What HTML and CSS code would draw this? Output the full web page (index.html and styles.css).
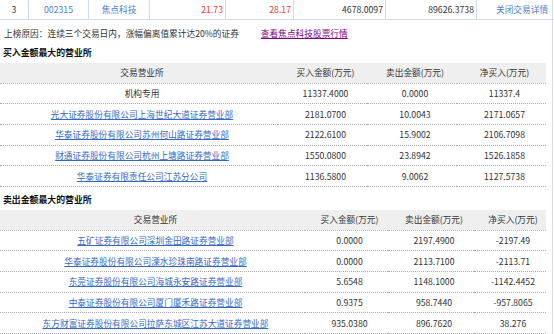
FILE: index.html
```html
<!DOCTYPE html>
<html lang="zh-CN">
<head>
    <meta charset="UTF-8">
    <title>龙虎榜 - 焦点科技</title>
    <link rel="stylesheet" href="styles.css">
</head>
<body>
    <div class="page">
        <table class="stock-row">
            <tr>
                <td class="c-no">3</td>
                <td class="c-code blue">002315</td>
                <td class="c-name blue">焦点科技</td>
                <td class="c-price num red">21.73</td>
                <td class="c-rise num red">28.17</td>
                <td class="c-vol num">4678.0097</td>
                <td class="c-amt num">89626.3738</td>
                <td class="c-act blue">关闭交易详情</td>
            </tr>
        </table>

        <p class="reason">上榜原因：连续三个交易日内，涨幅偏离值累计达20%的证券<a class="quote-link" href="#">查看焦点科技股票行情</a></p>

        <h3>买入金额最大的营业所</h3>
        <table class="dept buy">
            <colgroup>
                <col class="w1"><col class="w2"><col class="w3"><col class="w4">
            </colgroup>
            <tr class="head">
                <td>交易营业所</td>
                <td>买入金额(万元)</td>
                <td>卖出金额(万元)</td>
                <td>净买入(万元)</td>
            </tr>
            <tr><td>机构专用</td><td>11337.4000</td><td>0.0000</td><td>11337.4</td></tr>
            <tr><td><a href="#">光大证券股份有限公司上海世纪大道证券营业部</a></td><td>2181.0700</td><td>10.0043</td><td>2171.0657</td></tr>
            <tr><td><a href="#">华泰证券股份有限公司苏州何山路证券营业部</a></td><td>2122.6100</td><td>15.9002</td><td>2106.7098</td></tr>
            <tr><td><a href="#">财通证券股份有限公司杭州上塘路证券营业部</a></td><td>1550.0800</td><td>23.8942</td><td>1526.1858</td></tr>
            <tr><td><a href="#">华泰证券有限责任公司江苏分公司</a></td><td>1136.5800</td><td>9.0062</td><td>1127.5738</td></tr>
        </table>

        <h3 class="sell-title">卖出金额最大的营业所</h3>
        <table class="dept sell">
            <colgroup>
                <col class="w1"><col class="w2"><col class="w3"><col class="w4">
            </colgroup>
            <tr class="head">
                <td>交易营业所</td>
                <td>买入金额(万元)</td>
                <td>卖出金额(万元)</td>
                <td>净买入(万元)</td>
            </tr>
            <tr><td><a href="#">五矿证券有限公司深圳金田路证券营业部</a></td><td>0.0000</td><td>2197.4900</td><td>-2197.49</td></tr>
            <tr><td><a href="#">华泰证券股份有限公司溧水珍珠南路证券营业部</a></td><td>0.0000</td><td>2113.7100</td><td>-2113.71</td></tr>
            <tr><td><a href="#">东莞证券股份有限公司海城永安路证券营业部</a></td><td>5.6548</td><td>1148.1000</td><td>-1142.4452</td></tr>
            <tr><td><a href="#">中泰证券股份有限公司厦门厦禾路证券营业部</a></td><td>0.9375</td><td>958.7440</td><td>-957.8065</td></tr>
            <tr><td><a href="#">东方财富证券股份有限公司拉萨东城区江苏大道证券营业部</a></td><td>935.0380</td><td>896.7620</td><td>38.276</td></tr>
        </table>
    </div>
</body>
</html>
```

FILE: styles.css
```css
body {
    margin: 0;
    background: #ffffff;
    color: #333333;
    font-family: "Noto Sans CJK SC", "DejaVu Sans", sans-serif;
    font-size: 8.7px;
}

.page {
    width: 552px;
    border-right: 1px solid #d6dde6;
    min-height: 334px;
}

table {
    border-collapse: collapse;
    table-layout: fixed;
}

a {
    color: #3469c4;
    text-decoration: underline;
}

.blue {
    color: #4a80cf;
}

.red {
    color: #f03a3a;
}

/* top summary row */
.stock-row {
    width: 552px;
}

.stock-row td {
    height: 19px;
    padding: 0;
    border-left: 1px solid #cddcee;
    border-bottom: 1px solid #cddcee;
    text-align: center;
    white-space: nowrap;
}

.stock-row td:first-child {
    border-left: none;
}

.stock-row td:last-child {
    border-right: 1px solid #cddcee;
}

.stock-row .num {
    text-align: right;
    padding-right: 2px;
}

.c-no { width: 28px; }
.c-code { width: 59px; }
.c-name { width: 60px; }
.c-price { width: 73px; }
.c-rise { width: 65px; }
.c-vol { width: 89px; }
.c-amt { width: 88px; }
.c-act { width: 90px; }

.reason {
    margin: 7px 0 0 4px;
    line-height: 14px;
}

.quote-link {
    margin-left: 22px;
    color: #800080;
}

h3 {
    margin: 5px 0 3px 3px;
    font-size: 8.9px;
    font-weight: bold;
    line-height: 14px;
    color: #111111;
}

.sell-title {
    margin-top: 6px;
}

/* broker tables */
.dept {
    width: 546px;
}

.dept td {
    height: 19.67px;
    padding: 0 0 0 6px;
    border-bottom: 1px dotted #a8a8a8;
    text-align: center;
    white-space: nowrap;
}

.dept .head td {
    background: #efefef;
    color: #333333;
    border-bottom: 1px dotted #b8b8b8;
}

.buy .w1 { width: 278px; }
.buy .w2 { width: 89px; }
.buy .w3 { width: 90px; }
.buy .w4 { width: 89px; }

.sell .w1 { width: 305px; }
.sell .w2 { width: 83px; }
.sell .w3 { width: 86px; }
.sell .w4 { width: 72px; }
```
